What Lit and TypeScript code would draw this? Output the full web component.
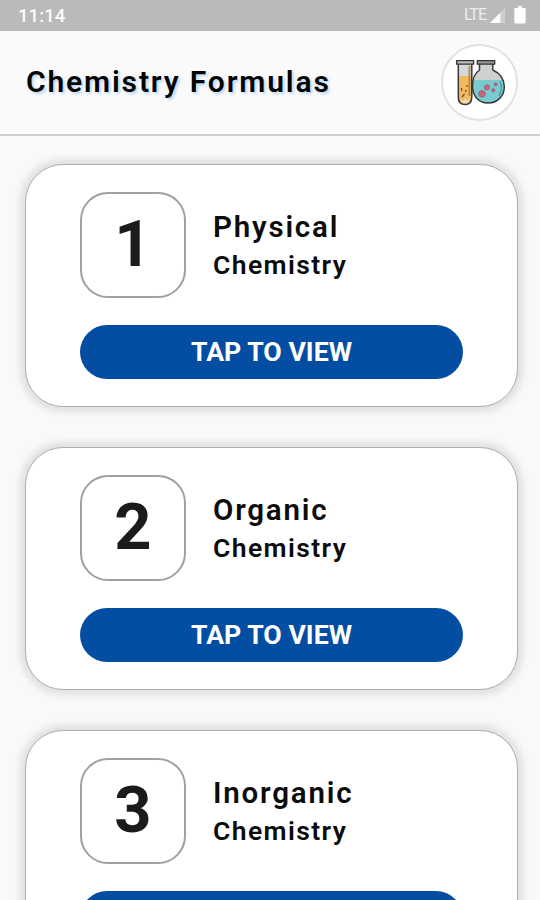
import { LitElement, html, css } from "lit";
import { customElement } from "lit/decorators.js";

@customElement("status-bar")
class StatusBar extends LitElement {
  static styles = css`
    :host {
      display: flex;
      justify-content: space-between;
      box-sizing: border-box;
      height: 30.5px;
      padding: 0 14px 0 18px;
      background: #bababa;
      color: #fbfbfb;
      font: 500 18.5px/32px Roboto, sans-serif;
    }
    .time { letter-spacing: 0.1px; }
    .signals { display: flex; align-items: flex-start; }
    .lte { font-size: 16px; font-weight: 400; line-height: 30px; letter-spacing: -1px; color: #ededed; }
    .signal { margin: 8px 0 0 4px; }
    .battery { margin: 6px 0 0 9px; }
  `;
  render() {
    return html`
      <span class="time">11:14</span>
      <div class="signals">
        <span class="lte">LTE</span>
        <svg class="signal" width="15" height="15" viewBox="0 0 16 16">
          <path d="M16 0V16H0Z" fill="#d0d0d0" />
          <path d="M11 5V16H0Z" fill="#fff" />
        </svg>
        <svg class="battery" width="12" height="18" viewBox="0 0 12 19">
          <path d="M4 0H8V2H10.5Q12 2 12 3.5V17Q12 18.5 10.5 18.5H1.5Q0 18.5 0 17V3.5Q0 2 1.5 2H4Z" fill="#fff" />
        </svg>
      </div>
    `;
  }
}

@customElement("app-header")
class AppHeader extends LitElement {
  static styles = css`
    :host {
      display: flex;
      justify-content: space-between;
      align-items: center;
      box-sizing: border-box;
      height: 105px;
      padding: 0 22px 0 26px;
      border-bottom: 2px solid #cfcfcf;
      background: #fafafa;
      font-family: Roboto, sans-serif;
    }
    .title {
      margin: 0;
      padding-bottom: 2px;
      font-size: 30px;
      font-weight: 600;
      letter-spacing: 1.85px;
      white-space: nowrap;
      color: #050505;
      text-shadow: 2px 2px 3px #b9d6ee;
    }
    .logo {
      box-sizing: border-box;
      width: 77px;
      height: 77px;
      border: 2px solid #e2e2e2;
      border-radius: 50%;
      background: #fff;
    }
    .logo svg { display: block; }
  `;
  render() {
    return html`
      <h1 class="title">Chemistry Formulas</h1>
      <div class="logo">
        <svg width="73" height="73" viewBox="443 46 73 73" stroke-linejoin="round">
          <path d="M479.5 64V70C475 73 472.5 79 472.5 86C472.5 96 478.5 103 488 103C497.5 103 504.3 96 504.3 87C504.3 79 499.5 73 492.8 70V64Z" fill="#cdd1d1" />
          <path d="M473.2 80H502.9C506.5 92 499 103 488 103C478 103 470 93 473.2 80Z" fill="#79cbd0" />
          <path d="M479.5 64V70C475 73 472.5 79 472.5 86C472.5 96 478.5 103 488 103C497.5 103 504.3 96 504.3 87C504.3 79 499.5 73 492.8 70V64" fill="none" stroke="#383838" stroke-width="1.5" />
          <rect x="477.3" y="60.6" width="17.4" height="3.6" fill="#929898" stroke="#333" stroke-width="1.3" />
          <path d="M458.3 64V97Q458.3 104.6 465 104.6Q471.8 104.6 471.8 97V64Z" fill="#d5d8d9" />
          <path d="M458.3 76H471.8V97Q471.8 104.6 465 104.6Q458.3 104.6 458.3 97Z" fill="#f2b95f" />
          <path d="M460.4 98L463 101L465 98.5L467 101L469.6 98Q469 103.5 465 103.5Q461 103.5 460.4 98Z" fill="#e5dccb" />
          <path d="M469.4 66V96" stroke="#b28a50" stroke-width="1.8" />
          <path d="M461.5 88V91M464.5 94L462 97M465.7 90V92M467 85V87" stroke="#69532f" stroke-width="1.2" />
          <path d="M458.3 64V97Q458.3 104.6 465 104.6Q471.8 104.6 471.8 97V64" fill="none" stroke="#383838" stroke-width="1.5" />
          <rect x="456.6" y="60.6" width="17" height="3.6" fill="#b8bdbd" stroke="#333" stroke-width="1.3" />
          <g fill="#c9667b" stroke="#8c5267" stroke-width=".6">
            <circle cx="482" cy="93.8" r="3.3" />
            <circle cx="487" cy="87.3" r="2.6" />
            <circle cx="493.3" cy="90.3" r="1.7" />
            <circle cx="495.7" cy="84.3" r="1.5" />
          </g>
          <path d="M500 81Q503 89 499 96" fill="none" stroke="#4c9aa3" stroke-width="1.3" />
        </svg>
      </div>
    `;
  }
}

@customElement("topic-card")
class TopicCard extends LitElement {
  static properties = { number: { type: Number }, name: {} };
  declare number: number;
  declare name: string;
  static styles = css`
    :host {
      display: flex;
      flex-direction: column;
      flex: none;
      gap: 27px;
      box-sizing: border-box;
      height: 243px;
      padding: 27px 54px 0;
      border: 1.5px solid #adadad;
      border-radius: 38px;
      background: #fff;
      box-shadow: 0 0 7px 5px #e0e0e0;
      font-family: Roboto, sans-serif;
      color: #0c0c0c;
    }
    .top { display: flex; gap: 27px; }
    .number {
      display: flex;
      justify-content: center;
      box-sizing: border-box;
      width: 106px;
      height: 106px;
      border: 2px solid #a0a0a0;
      border-radius: 28px;
      font-size: 65px;
      font-weight: 700;
      line-height: 101px;
      color: #1b1b1b;
    }
    .label { display: flex; flex-direction: column; padding-top: 16px; white-space: nowrap; font-weight: 600; }
    .name { font-size: 29.5px; line-height: 38px; letter-spacing: 1.8px; }
    .kind { font-size: 26.5px; line-height: 38px; letter-spacing: 1.4px; }
    .view {
      height: 54px;
      border: 0;
      border-radius: 27px;
      padding: 1px 0 0;
      background: #034ea2;
      color: #fff;
      font: 700 26.7px/52px Roboto, sans-serif;
    }
  `;
  render() {
    return html`
      <div class="top">
        <div class="number">${this.number}</div>
        <div class="label">
          <span class="name">${this.name}</span>
          <span class="kind">Chemistry</span>
        </div>
      </div>
      <button class="view">TAP TO VIEW</button>
    `;
  }
}

@customElement("app-root")
class AppRoot extends LitElement {
  static styles = css`
    :host { display: block; height: 900px; overflow: hidden; background: #f9f9f9; }
    .list { display: flex; flex-direction: column; gap: 40px; padding: 28px 22px 0 25px; }
  `;
  render() {
    return html`
      <status-bar></status-bar>
      <app-header></app-header>
      <main class="list">
        ${["Physical", "Organic", "Inorganic"].map(
          (name, i) => html`<topic-card .number=${i + 1} .name=${name}></topic-card>`
        )}
      </main>
    `;
  }
}
